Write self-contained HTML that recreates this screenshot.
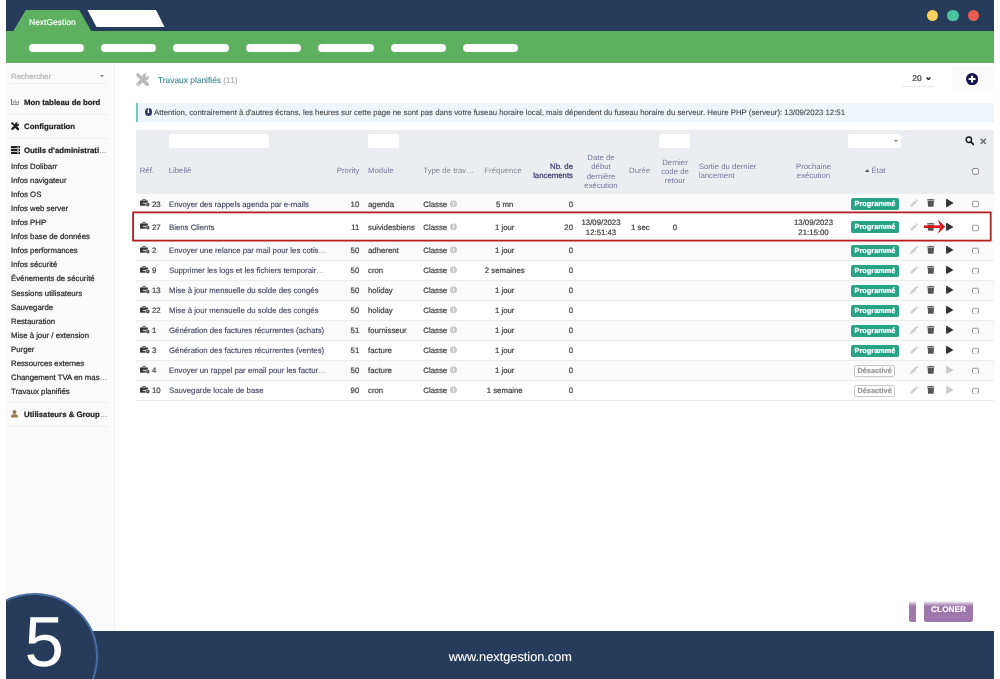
<!DOCTYPE html>
<html lang="fr"><head><meta charset="utf-8"><title>NextGestion - Travaux planifiés</title>
<style>
*{box-sizing:border-box;margin:0;padding:0}
html,body{width:1000px;height:679px;overflow:hidden;background:#fff}
body{-webkit-text-stroke:.22px;text-rendering:geometricPrecision;font-family:"Liberation Sans",sans-serif;font-size:7.8px;color:#444;position:relative}
.abs{position:absolute}
#frame{position:absolute;left:6px;top:0;width:988px;height:679px;overflow:hidden;will-change:transform;opacity:.9999}
#top{position:absolute;left:0;top:0;width:988px;height:31.500px;background:#273b5b}
#green{position:absolute;left:0;top:31px;width:988px;height:31.700px;background:#5db05f}
.pill{position:absolute;top:13px;height:8.400px;width:55.500px;border-radius:5px;background:#fff}
.dot{position:absolute;top:9.600px;width:11.600px;height:11.600px;border-radius:50%}
#tabname{position:absolute;left:23px;top:17px;color:#fff;font-size:8.5px;white-space:nowrap;-webkit-text-stroke:.15px}
#side{position:absolute;left:0;top:62.700px;width:108.500px;height:568px;background:#fafafa;border-right:1px solid #f3f3f3}
#side .srch{position:absolute;left:5px;top:9.300px;font-size:7.8px;line-height:9px;color:#b4b4b4}
#side .line{position:absolute;left:2.500px;width:99px;height:1px;background:#efefef}
#side .hd{position:absolute;left:18px;font-weight:bold;font-size:7.8px;line-height:9px;color:#1e1e1e;white-space:nowrap}
#side .it{position:absolute;left:5px;font-size:7.8px;line-height:9px;color:#2a2a2a;white-space:nowrap}
#foot{position:absolute;left:0;top:630.600px;width:988px;height:49px;background:#273b5b}
#foot span{position:absolute;left:0;width:1008.600px;text-align:center;top:18.4px;color:#fff;font-size:12.750px;white-space:nowrap;-webkit-text-stroke:.1px}
#circ{position:absolute;left:-35px;top:592.800px;width:127.400px;height:127.400px;border-radius:50%;background:#273b5b;border:2px solid #4a6da3}
#five{position:absolute;left:18.500px;top:603px;font-size:71px;line-height:80px;color:#fff;-webkit-text-stroke:0}
#title{position:absolute;left:152px;top:74.700px;font-size:8.4px;color:#3d8992;white-space:nowrap;-webkit-text-stroke:.12px}
#title i{font-style:normal;color:#aaa}
#info{position:absolute;left:129.500px;top:102.700px;width:858.500px;height:19px;background:#eef6fb;border-left:2.400px solid #7ec3c6}
#info span{position:absolute;left:16.600px;top:5px;-webkit-text-stroke:.12px;font-size:7.8px;color:#4c4c4c;white-space:nowrap}
#info .ib{position:absolute;left:7.100px;top:5.400px;width:7.800px;height:7.800px;border-radius:50%;background:#3b3b6b;color:#fff;font-size:6.500px;font-weight:bold;text-align:center;line-height:8px;font-family:"Liberation Serif",serif}
#thead{position:absolute;left:129.500px;top:129.500px;width:858.500px;height:64.300px;background:#ecedf0}
.inp{position:absolute;background:#fff;border-radius:2px;height:14.400px;top:4px}
.th{position:absolute;-webkit-text-stroke:0;color:#75779f;font-size:7.8px;line-height:9.200px;white-space:nowrap}
.th.c{text-align:center;transform:translateX(-50%)}
.th.r{text-align:right;transform:translateX(-100%)}
.row{position:absolute;left:129.500px;width:858.500px;border-bottom:1px solid #ececec}
.row.odd{background:#fafafa}
.row>*{position:absolute;white-space:nowrap;top:var(--c);transform:translateY(-50%);line-height:9.400px}
.row>svg,.row>.badge,.row>.cb{top:calc(var(--c) - var(--d))}
.row .c{transform:translate(-50%,-50%);text-align:center}
.row .r{transform:translate(-100%,-50%);text-align:right}
.el{font-style:normal;color:#999}
.row .lab{color:#3a3e5a;-webkit-text-stroke:.1px}
.row>.ml{top:calc(var(--c) - 1.1px)}
.ic-cron{width:10.100px;height:8.100px;left:4.400px}
.row>.ic-cron{top:calc(var(--c) - var(--d) - .8px)}
.row>.ic-pen,.row>.ic-trash,.row>.ic-play{top:calc(var(--c) - var(--d) - 1px)}
.row>.cb{top:calc(var(--c) - var(--d) - .3px)}
.row.r2>.ic-pen,.row.r2>.ic-trash,.row.r2>.ic-play{top:calc(var(--c) - var(--d) - .3px)}
.row.r2>.cb{top:calc(var(--c) - var(--d) + .8px)}
.ic-pen{width:8.400px;height:8.400px;left:774px}
.ic-trash{width:7.600px;height:8.400px;left:791.700px}
.ic-play{width:7.600px;height:8.600px;left:810.500px}
.cb{width:6.900px;height:6.900px}
.badge{left:715.400px;width:48.200px;height:11.800px;border-radius:2.200px;background:#27a483;color:#fff;font-weight:bold;font-size:7.35px;text-align:center;line-height:11.600px !important}
.badge.off{background:#fff;border:1px solid #c6c6c6;color:#999;left:718.700px;width:40.800px;line-height:9.800px !important}
.qi{display:inline-block;width:7px;height:7px;vertical-align:-1.300px;position:relative;top:-1.700px;margin-left:3.200px}
</style></head><body>
<div id="frame">
<div id="top"></div>
<div id="green"></div>
<svg class="abs" style="left:0;top:0" width="200" height="32" viewBox="0 0 200 32"><path d="M0 32V31h7.300L19.800 10H73.300L85.200 31V32z" fill="#5db05f"/><path d="M81.500 10H150l8.500 17H90.500z" fill="#fff"/></svg>
<div id="tabname">NextGestion</div>

<div class="pill" style="left:22.5px;top:44px"></div>
<div class="pill" style="left:94.9px;top:44px"></div>
<div class="pill" style="left:167.3px;top:44px"></div>
<div class="pill" style="left:239.7px;top:44px"></div>
<div class="pill" style="left:312.1px;top:44px"></div>
<div class="pill" style="left:384.5px;top:44px"></div>
<div class="pill" style="left:456.9px;top:44px"></div>
<div class="dot" style="left:920.700px;background:#fbd05f"></div><div class="dot" style="left:941.100px;background:#4bc4a1"></div><div class="dot" style="left:961.500px;background:#e7604f"></div>
<div id="side">
<div class="srch">Rechercher</div><svg class="abs" style="left:94px;top:12.500px" width="4" height="3" viewBox="0 0 4 3"><path d="M0 0h4L2 2.600z" fill="#888"/></svg>
<div class="line" style="top:20.700px"></div>
<svg class="abs" style="left:4.700px;top:36.400px" width="8.400" height="6.300" viewBox="0 0 84 63"><path d="M0 0h11v52h73v11H0z" fill="#777"/><path d="M20 24h10v22H20zM36 8h10v38H36zM52 24h10v22H52zM68 14h10v32H68z" fill="#8a8a8a"/></svg>
<div class="hd" style="top:35.3px">Mon tableau de bord</div>
<div class="line" style="top:51.700px"></div>
<svg class="abs" style="left:4.6px;top:59.5px" width="8.4" height="8.4" viewBox="0 0 134 134"><g stroke="#1a1a1a" stroke-linecap="round" fill="none"><path d="M18 18L50 50" stroke-width="32"/><path d="M52 52L80 80" stroke-width="12"/><path d="M86 86L113 113" stroke-width="38"/><path d="M22 112L54 80" stroke-width="38"/></g><circle cx="96" cy="38" r="33" fill="#1a1a1a"/><path d="M60 74L84 50" stroke="#1a1a1a" stroke-width="22"/><path d="M100 34L134 0" stroke="#fafafa" stroke-width="22"/><circle cx="19" cy="115" r="7" fill="#fafafa"/></svg>
<div class="hd" style="top:59.3px">Configuration</div>
<div class="line" style="top:75.600px"></div>
<svg class="abs" style="left:5px;top:83.500px" width="9" height="8" viewBox="0 0 9 8"><path d="M0 0h9v2.200H0zM0 2.900h9v2.200H0zM0 5.800h9V8H0z" fill="#222"/><path d="M6 .7h2v.8H6zM6 3.600h2v.8H6zM6 6.500h2v.8H6z" fill="#fafafa"/></svg>
<div class="hd" style="top:83.3px">Outils d'administrati<span style="font-weight:normal;color:#999">…</span></div>
<div class="it" style="top:99.3px">Infos Dolibarr</div>
<div class="it" style="top:113.3px">Infos navigateur</div>
<div class="it" style="top:127.3px">Infos OS</div>
<div class="it" style="top:141.3px">Infos web server</div>
<div class="it" style="top:155.3px">Infos PHP</div>
<div class="it" style="top:169.3px">Infos base de données</div>
<div class="it" style="top:183.3px">Infos performances</div>
<div class="it" style="top:197.3px">Infos sécurité</div>
<div class="it" style="top:211.3px">Événements de sécurité</div>
<div class="it" style="top:226.3px">Sessions utilisateurs</div>
<div class="it" style="top:240.3px">Sauvegarde</div>
<div class="it" style="top:254.3px">Restauration</div>
<div class="it" style="top:268.3px">Mise à jour / extension</div>
<div class="it" style="top:282.3px">Purger</div>
<div class="it" style="top:296.3px">Ressources externes</div>
<div class="it" style="top:310.3px">Changement TVA en mas<span style="color:#999">…</span></div>
<div class="it" style="top:324.3px">Travaux planifiés</div>
<div class="line" style="top:339.300px"></div>
<svg class="abs" style="left:5px;top:347.600px" width="7" height="7.600" viewBox="0 0 8 9"><circle cx="4" cy="2.300" r="2.300" fill="#9a7a4a"/><path d="M0 9V7.500C0 6 1.200 5 2.500 5h3C6.800 5 8 6 8 7.500V9z" fill="#9a7a4a"/></svg>
<div class="hd" style="top:347.3px">Utilisateurs &amp; Group<span style="font-weight:normal;color:#999">…</span></div>
<div class="line" style="top:363.500px"></div>
</div>
<svg class="abs" style="left:129.8px;top:72.7px" width="13.4" height="13.4" viewBox="0 0 134 134"><g stroke="#b9b9b9" stroke-linecap="round" fill="none"><path d="M18 18L50 50" stroke-width="32"/><path d="M52 52L80 80" stroke-width="12"/><path d="M86 86L113 113" stroke-width="38"/><path d="M22 112L54 80" stroke-width="38"/></g><circle cx="96" cy="38" r="33" fill="#b9b9b9"/><path d="M60 74L84 50" stroke="#b9b9b9" stroke-width="22"/><path d="M100 34L134 0" stroke="#fff" stroke-width="22"/><circle cx="19" cy="115" r="7" fill="#fff"/></svg>
<div id="title">Travaux planifiés <i>(11)</i></div>
<div class="abs" style="left:906.3px;top:74.3px;font-size:8.4px;line-height:9px;color:#333">20</div><svg class="abs" style="left:920.3px;top:77px" width="5" height="3.4" viewBox="0 0 50 34"><path d="M6 6L25 26 44 6" stroke="#222" stroke-width="14" fill="none"/></svg><div class="abs" style="left:895.5px;top:85.9px;width:32.700px;height:1px;background:#e9e9e9"></div>
<div class="abs" style="left:945.8px;top:66px;width:41.200px;height:24.800px;background:#fafafa"></div><svg class="abs" style="left:959.9px;top:72.7px" width="12.2" height="12.2" viewBox="0 0 12 12"><circle cx="6" cy="6" r="6" fill="#161650"/><path d="M6 2.600v6.800M2.600 6h6.800" stroke="#fff" stroke-width="2"/></svg>
<div id="info"><div class="ib">i</div><span>Attention, contrairement à d'autres écrans, les heures sur cette page ne sont pas dans votre fuseau horaire local, mais dépendent du fuseau horaire du serveur. Heure PHP (serveur): 13/09/2023 12:51</span></div>
<div id="thead">
<div class="inp" style="left:33.7px;width:100px"></div>
<div class="inp" style="left:232.5px;width:31px"></div>
<div class="inp" style="left:523.2px;width:31.700px"></div>
<div class="inp" style="left:712.8px;width:52.800px"></div><svg class="abs" style="left:758.1px;top:10.500px" width="4" height="3" viewBox="0 0 4 3"><path d="M0 0h4L2 2.600z" fill="#888"/></svg>
<svg class="abs" style="left:829.3px;top:6.800px" width="9.500" height="9.500" viewBox="0 0 10 10"><circle cx="4" cy="4" r="2.900" stroke="#111" stroke-width="1.450" fill="none"/><path d="M6.400 6.400L9.100 9.100" stroke="#111" stroke-width="1.700" stroke-linecap="round"/></svg>
<svg class="abs" style="left:844.8px;top:8.300px" width="6.500" height="6.500" viewBox="0 0 7 7"><path d="M.8.800L6.200 6.200M6.200.8L.8 6.200" stroke="#6e6e6e" stroke-width="1.800" stroke-linecap="butt"/></svg>
<div class="th " style="left:4.2px;top:36.7px">Réf.</div>
<div class="th " style="left:33.2px;top:36.7px">Libellé</div>
<div class="th r" style="left:223.8px;top:36.7px">Prority</div>
<div class="th " style="left:232.5px;top:36.7px">Module</div>
<div class="th " style="left:287.8px;top:36.7px"><span style="color:#85858f">Type de trav…</span></div>
<div class="th c" style="left:367.5px;top:36.7px"><span style="color:#85858f">Fréquence</span></div>
<div class="th r" style="left:437.5px;top:32.2px"><span style="color:#35386a;-webkit-text-stroke:.2px">Nb. de<br>lancements</span></div>
<div class="th c" style="left:465.5px;top:23.6px">Date de<br>début<br>dernière<br>exécution</div>
<div class="th " style="left:493.5px;top:36.7px"><span style="color:#7f8096">Durée</span></div>
<div class="th c" style="left:539.5px;top:28.1px">Dernier<br>code de<br>retour</div>
<div class="th " style="left:563.2px;top:32.7px">Sortie du dernier<br>lancement</div>
<div class="th c" style="left:678.0px;top:32.7px">Prochaine<br>exécution</div>
<div class="th " style="left:729.3px;top:36.7px"><svg width="4.600" height="3" viewBox="0 0 46 30" style="vertical-align:1.500px;margin-right:2.200px"><path d="M0 30L23 2 46 30z" fill="#555"/></svg>État</div>
<svg class="cb abs" viewBox="0 0 70 70" style="left:836.5px;top:38.9px"><rect x="5" y="5" width="60" height="60" rx="15" fill="#fff" stroke="#7e7e7e" stroke-width="9.500"/></svg>
</div>
<div class="row odd" style="top:193.7px;height:19.3px;--c:11.7px;--d:1.4px">
<svg class="ic-cron" viewBox="0 0 104 83"><path d="M25 18L28 4.500H56L59 18" stroke="#3a3a3a" stroke-width="8" fill="none" stroke-linejoin="round"/><rect x="0" y="15" width="82" height="54" rx="6" fill="#3a3a3a"/><rect x="29" y="40" width="40" height="9" fill="#f4f4f4"/><circle cx="80" cy="58" r="22" fill="#3a3a3a" stroke="#fcfcfc" stroke-width="6"/><path d="M76 49v12h11" stroke="#f0f0f0" stroke-width="6" fill="none"/></svg>
<span style="left:16.5px">23</span>
<span class="lab" style="left:33.5px">Envoyer des rappels agenda par e-mails</span>
<span class="r" style="left:223.8px">10</span>
<span style="left:232.5px">agenda</span>
<span style="left:287.8px">Classe<svg class="qi" viewBox="0 0 12 12"><circle cx="6" cy="6" r="6" fill="#cacaca"/><path d="M5.300 5h1.500v4.300H5.300zM5.300 2.700h1.500v1.500H5.300z" fill="#fff"/></svg></span>
<span class="c" style="left:369.2px">5 mn</span>
<span class="r" style="left:437.5px">0</span>
<span class="badge">Programmé</span>
<svg class="ic-pen" viewBox="0 0 16 16"><path fill="#ccc" d="M11.300 1.300a1.500 1.500 0 0 1 2.100 0l1.300 1.300a1.500 1.500 0 0 1 0 2.100l-1.200 1.200-3.400-3.400zM9.200 3.400l3.400 3.400-7.800 7.800-4 .8.800-4z"/></svg>
<svg class="ic-trash" viewBox="0 0 14 16"><path fill="#555" d="M5 0h4l.6 1H13.200a.8.800 0 0 1 .8.800V3H0V1.800A.8.800 0 0 1 .8 1H4.400zM1 4h12l-.7 10.600A1.500 1.500 0 0 1 10.800 16H3.200a1.500 1.500 0 0 1-1.500-1.400z"/></svg>
<svg class="ic-play" viewBox="0 0 14 16"><path fill="#333" d="M1 .3L13.300 7.400a.7.700 0 0 1 0 1.200L1 15.700a.7.700 0 0 1-1-.6V.9A.7.700 0 0 1 1 .3z"/></svg>
<svg class="cb" viewBox="0 0 70 70" style="left:836.5px"><rect x="5" y="5" width="60" height="60" rx="15" fill="#fff" stroke="#7e7e7e" stroke-width="9.500"/></svg>
</div>
<div class="row r2" style="top:213.0px;height:28.0px;--c:15.4px;--d:1.5px">
<svg class="ic-cron" viewBox="0 0 104 83"><path d="M25 18L28 4.500H56L59 18" stroke="#3a3a3a" stroke-width="8" fill="none" stroke-linejoin="round"/><rect x="0" y="15" width="82" height="54" rx="6" fill="#3a3a3a"/><rect x="29" y="40" width="40" height="9" fill="#f4f4f4"/><circle cx="80" cy="58" r="22" fill="#3a3a3a" stroke="#fcfcfc" stroke-width="6"/><path d="M76 49v12h11" stroke="#f0f0f0" stroke-width="6" fill="none"/></svg>
<span style="left:16.5px">27</span>
<span class="lab" style="left:33.5px">Biens Clients</span>
<span class="r" style="left:223.8px">11</span>
<span style="left:232.5px">suividesbiens</span>
<span style="left:287.8px">Classe<svg class="qi" viewBox="0 0 12 12"><circle cx="6" cy="6" r="6" fill="#cacaca"/><path d="M5.300 5h1.500v4.300H5.300zM5.300 2.700h1.500v1.500H5.300z" fill="#fff"/></svg></span>
<span class="c" style="left:369.2px">1 jour</span>
<span class="r" style="left:437.5px">20</span>
<span class="c ml" style="left:465.5px">13/09/2023<br>12:51:43</span>
<span style="left:495.5px">1 sec</span>
<span class="c" style="left:539.5px">0</span>
<span class="c ml" style="left:678.0px">13/09/2023<br>21:15:00</span>
<span class="badge">Programmé</span>
<svg class="ic-pen" viewBox="0 0 16 16"><path fill="#ccc" d="M11.300 1.300a1.500 1.500 0 0 1 2.100 0l1.300 1.300a1.500 1.500 0 0 1 0 2.100l-1.200 1.200-3.400-3.400zM9.200 3.400l3.400 3.400-7.800 7.800-4 .8.800-4z"/></svg>
<svg class="ic-trash" viewBox="0 0 14 16"><path fill="#555" d="M5 0h4l.6 1H13.200a.8.800 0 0 1 .8.800V3H0V1.800A.8.800 0 0 1 .8 1H4.400zM1 4h12l-.7 10.600A1.500 1.500 0 0 1 10.800 16H3.200a1.500 1.500 0 0 1-1.500-1.400z"/></svg>
<svg class="ic-play" viewBox="0 0 14 16"><path fill="#333" d="M1 .3L13.300 7.400a.7.700 0 0 1 0 1.200L1 15.700a.7.700 0 0 1-1-.6V.9A.7.700 0 0 1 1 .3z"/></svg>
<svg class="cb" viewBox="0 0 70 70" style="left:836.5px"><rect x="5" y="5" width="60" height="60" rx="15" fill="#fff" stroke="#7e7e7e" stroke-width="9.500"/></svg>
</div>
<div class="row odd" style="top:241.0px;height:20.0px;--c:10.4px;--d:0.6px">
<svg class="ic-cron" viewBox="0 0 104 83"><path d="M25 18L28 4.500H56L59 18" stroke="#3a3a3a" stroke-width="8" fill="none" stroke-linejoin="round"/><rect x="0" y="15" width="82" height="54" rx="6" fill="#3a3a3a"/><rect x="29" y="40" width="40" height="9" fill="#f4f4f4"/><circle cx="80" cy="58" r="22" fill="#3a3a3a" stroke="#fcfcfc" stroke-width="6"/><path d="M76 49v12h11" stroke="#f0f0f0" stroke-width="6" fill="none"/></svg>
<span style="left:16.5px">2</span>
<span class="lab" style="left:33.5px">Envoyer une relance par mail pour les cotis<i class="el">…</i></span>
<span class="r" style="left:223.8px">50</span>
<span style="left:232.5px">adherent</span>
<span style="left:287.8px">Classe<svg class="qi" viewBox="0 0 12 12"><circle cx="6" cy="6" r="6" fill="#cacaca"/><path d="M5.300 5h1.500v4.300H5.300zM5.300 2.700h1.500v1.500H5.300z" fill="#fff"/></svg></span>
<span class="c" style="left:369.2px">1 jour</span>
<span class="r" style="left:437.5px">0</span>
<span class="badge">Programmé</span>
<svg class="ic-pen" viewBox="0 0 16 16"><path fill="#ccc" d="M11.300 1.300a1.500 1.500 0 0 1 2.100 0l1.300 1.300a1.500 1.500 0 0 1 0 2.100l-1.200 1.200-3.400-3.400zM9.200 3.400l3.400 3.400-7.800 7.800-4 .8.800-4z"/></svg>
<svg class="ic-trash" viewBox="0 0 14 16"><path fill="#555" d="M5 0h4l.6 1H13.200a.8.800 0 0 1 .8.800V3H0V1.800A.8.800 0 0 1 .8 1H4.400zM1 4h12l-.7 10.600A1.500 1.500 0 0 1 10.800 16H3.200a1.500 1.500 0 0 1-1.500-1.400z"/></svg>
<svg class="ic-play" viewBox="0 0 14 16"><path fill="#333" d="M1 .3L13.300 7.400a.7.700 0 0 1 0 1.200L1 15.700a.7.700 0 0 1-1-.6V.9A.7.700 0 0 1 1 .3z"/></svg>
<svg class="cb" viewBox="0 0 70 70" style="left:836.5px"><rect x="5" y="5" width="60" height="60" rx="15" fill="#fff" stroke="#7e7e7e" stroke-width="9.500"/></svg>
</div>
<div class="row" style="top:261.0px;height:20.0px;--c:10.4px;--d:0.6px">
<svg class="ic-cron" viewBox="0 0 104 83"><path d="M25 18L28 4.500H56L59 18" stroke="#3a3a3a" stroke-width="8" fill="none" stroke-linejoin="round"/><rect x="0" y="15" width="82" height="54" rx="6" fill="#3a3a3a"/><rect x="29" y="40" width="40" height="9" fill="#f4f4f4"/><circle cx="80" cy="58" r="22" fill="#3a3a3a" stroke="#fcfcfc" stroke-width="6"/><path d="M76 49v12h11" stroke="#f0f0f0" stroke-width="6" fill="none"/></svg>
<span style="left:16.5px">9</span>
<span class="lab" style="left:33.5px">Supprimer les logs et les fichiers temporair<i class="el">…</i></span>
<span class="r" style="left:223.8px">50</span>
<span style="left:232.5px">cron</span>
<span style="left:287.8px">Classe<svg class="qi" viewBox="0 0 12 12"><circle cx="6" cy="6" r="6" fill="#cacaca"/><path d="M5.300 5h1.500v4.300H5.300zM5.300 2.700h1.500v1.500H5.300z" fill="#fff"/></svg></span>
<span class="c" style="left:369.2px">2 semaines</span>
<span class="r" style="left:437.5px">0</span>
<span class="badge">Programmé</span>
<svg class="ic-pen" viewBox="0 0 16 16"><path fill="#ccc" d="M11.300 1.300a1.500 1.500 0 0 1 2.100 0l1.300 1.300a1.500 1.500 0 0 1 0 2.100l-1.200 1.200-3.400-3.400zM9.200 3.400l3.400 3.400-7.800 7.800-4 .8.800-4z"/></svg>
<svg class="ic-trash" viewBox="0 0 14 16"><path fill="#555" d="M5 0h4l.6 1H13.200a.8.800 0 0 1 .8.800V3H0V1.800A.8.800 0 0 1 .8 1H4.400zM1 4h12l-.7 10.600A1.500 1.500 0 0 1 10.800 16H3.200a1.500 1.500 0 0 1-1.500-1.400z"/></svg>
<svg class="ic-play" viewBox="0 0 14 16"><path fill="#333" d="M1 .3L13.300 7.400a.7.700 0 0 1 0 1.200L1 15.700a.7.700 0 0 1-1-.6V.9A.7.700 0 0 1 1 .3z"/></svg>
<svg class="cb" viewBox="0 0 70 70" style="left:836.5px"><rect x="5" y="5" width="60" height="60" rx="15" fill="#fff" stroke="#7e7e7e" stroke-width="9.500"/></svg>
</div>
<div class="row odd" style="top:281.0px;height:20.0px;--c:10.4px;--d:0.6px">
<svg class="ic-cron" viewBox="0 0 104 83"><path d="M25 18L28 4.500H56L59 18" stroke="#3a3a3a" stroke-width="8" fill="none" stroke-linejoin="round"/><rect x="0" y="15" width="82" height="54" rx="6" fill="#3a3a3a"/><rect x="29" y="40" width="40" height="9" fill="#f4f4f4"/><circle cx="80" cy="58" r="22" fill="#3a3a3a" stroke="#fcfcfc" stroke-width="6"/><path d="M76 49v12h11" stroke="#f0f0f0" stroke-width="6" fill="none"/></svg>
<span style="left:16.5px">13</span>
<span class="lab" style="left:33.5px">Mise à jour mensuelle du solde des congés</span>
<span class="r" style="left:223.8px">50</span>
<span style="left:232.5px">holiday</span>
<span style="left:287.8px">Classe<svg class="qi" viewBox="0 0 12 12"><circle cx="6" cy="6" r="6" fill="#cacaca"/><path d="M5.300 5h1.500v4.300H5.300zM5.300 2.700h1.500v1.500H5.300z" fill="#fff"/></svg></span>
<span class="c" style="left:369.2px">1 jour</span>
<span class="r" style="left:437.5px">0</span>
<span class="badge">Programmé</span>
<svg class="ic-pen" viewBox="0 0 16 16"><path fill="#ccc" d="M11.300 1.300a1.500 1.500 0 0 1 2.100 0l1.300 1.300a1.500 1.500 0 0 1 0 2.100l-1.200 1.200-3.400-3.400zM9.200 3.400l3.400 3.400-7.800 7.800-4 .8.800-4z"/></svg>
<svg class="ic-trash" viewBox="0 0 14 16"><path fill="#555" d="M5 0h4l.6 1H13.200a.8.800 0 0 1 .8.800V3H0V1.800A.8.800 0 0 1 .8 1H4.400zM1 4h12l-.7 10.600A1.500 1.500 0 0 1 10.800 16H3.200a1.500 1.500 0 0 1-1.500-1.400z"/></svg>
<svg class="ic-play" viewBox="0 0 14 16"><path fill="#333" d="M1 .3L13.300 7.400a.7.700 0 0 1 0 1.200L1 15.700a.7.700 0 0 1-1-.6V.9A.7.700 0 0 1 1 .3z"/></svg>
<svg class="cb" viewBox="0 0 70 70" style="left:836.5px"><rect x="5" y="5" width="60" height="60" rx="15" fill="#fff" stroke="#7e7e7e" stroke-width="9.500"/></svg>
</div>
<div class="row" style="top:301.0px;height:20.0px;--c:10.4px;--d:0.6px">
<svg class="ic-cron" viewBox="0 0 104 83"><path d="M25 18L28 4.500H56L59 18" stroke="#3a3a3a" stroke-width="8" fill="none" stroke-linejoin="round"/><rect x="0" y="15" width="82" height="54" rx="6" fill="#3a3a3a"/><rect x="29" y="40" width="40" height="9" fill="#f4f4f4"/><circle cx="80" cy="58" r="22" fill="#3a3a3a" stroke="#fcfcfc" stroke-width="6"/><path d="M76 49v12h11" stroke="#f0f0f0" stroke-width="6" fill="none"/></svg>
<span style="left:16.5px">22</span>
<span class="lab" style="left:33.5px">Mise à jour mensuelle du solde des congés</span>
<span class="r" style="left:223.8px">50</span>
<span style="left:232.5px">holiday</span>
<span style="left:287.8px">Classe<svg class="qi" viewBox="0 0 12 12"><circle cx="6" cy="6" r="6" fill="#cacaca"/><path d="M5.300 5h1.500v4.300H5.300zM5.300 2.700h1.500v1.500H5.300z" fill="#fff"/></svg></span>
<span class="c" style="left:369.2px">1 jour</span>
<span class="r" style="left:437.5px">0</span>
<span class="badge">Programmé</span>
<svg class="ic-pen" viewBox="0 0 16 16"><path fill="#ccc" d="M11.300 1.300a1.500 1.500 0 0 1 2.100 0l1.300 1.300a1.500 1.500 0 0 1 0 2.100l-1.200 1.200-3.400-3.400zM9.200 3.400l3.400 3.400-7.800 7.800-4 .8.800-4z"/></svg>
<svg class="ic-trash" viewBox="0 0 14 16"><path fill="#555" d="M5 0h4l.6 1H13.200a.8.800 0 0 1 .8.800V3H0V1.800A.8.800 0 0 1 .8 1H4.400zM1 4h12l-.7 10.600A1.500 1.500 0 0 1 10.800 16H3.200a1.500 1.500 0 0 1-1.500-1.400z"/></svg>
<svg class="ic-play" viewBox="0 0 14 16"><path fill="#333" d="M1 .3L13.300 7.400a.7.700 0 0 1 0 1.200L1 15.700a.7.700 0 0 1-1-.6V.9A.7.700 0 0 1 1 .3z"/></svg>
<svg class="cb" viewBox="0 0 70 70" style="left:836.5px"><rect x="5" y="5" width="60" height="60" rx="15" fill="#fff" stroke="#7e7e7e" stroke-width="9.500"/></svg>
</div>
<div class="row odd" style="top:321.0px;height:20.0px;--c:10.4px;--d:0.6px">
<svg class="ic-cron" viewBox="0 0 104 83"><path d="M25 18L28 4.500H56L59 18" stroke="#3a3a3a" stroke-width="8" fill="none" stroke-linejoin="round"/><rect x="0" y="15" width="82" height="54" rx="6" fill="#3a3a3a"/><rect x="29" y="40" width="40" height="9" fill="#f4f4f4"/><circle cx="80" cy="58" r="22" fill="#3a3a3a" stroke="#fcfcfc" stroke-width="6"/><path d="M76 49v12h11" stroke="#f0f0f0" stroke-width="6" fill="none"/></svg>
<span style="left:16.5px">1</span>
<span class="lab" style="left:33.5px">Génération des factures récurrentes (achats)</span>
<span class="r" style="left:223.8px">51</span>
<span style="left:232.5px">fournisseur</span>
<span style="left:287.8px">Classe<svg class="qi" viewBox="0 0 12 12"><circle cx="6" cy="6" r="6" fill="#cacaca"/><path d="M5.300 5h1.500v4.300H5.300zM5.300 2.700h1.500v1.500H5.300z" fill="#fff"/></svg></span>
<span class="c" style="left:369.2px">1 jour</span>
<span class="r" style="left:437.5px">0</span>
<span class="badge">Programmé</span>
<svg class="ic-pen" viewBox="0 0 16 16"><path fill="#ccc" d="M11.300 1.300a1.500 1.500 0 0 1 2.100 0l1.300 1.300a1.500 1.500 0 0 1 0 2.100l-1.200 1.200-3.400-3.400zM9.200 3.400l3.400 3.400-7.800 7.800-4 .8.800-4z"/></svg>
<svg class="ic-trash" viewBox="0 0 14 16"><path fill="#555" d="M5 0h4l.6 1H13.200a.8.800 0 0 1 .8.800V3H0V1.800A.8.800 0 0 1 .8 1H4.400zM1 4h12l-.7 10.600A1.500 1.500 0 0 1 10.800 16H3.200a1.500 1.500 0 0 1-1.500-1.400z"/></svg>
<svg class="ic-play" viewBox="0 0 14 16"><path fill="#333" d="M1 .3L13.300 7.400a.7.700 0 0 1 0 1.200L1 15.700a.7.700 0 0 1-1-.6V.9A.7.700 0 0 1 1 .3z"/></svg>
<svg class="cb" viewBox="0 0 70 70" style="left:836.5px"><rect x="5" y="5" width="60" height="60" rx="15" fill="#fff" stroke="#7e7e7e" stroke-width="9.500"/></svg>
</div>
<div class="row" style="top:341.0px;height:20.0px;--c:10.4px;--d:0.6px">
<svg class="ic-cron" viewBox="0 0 104 83"><path d="M25 18L28 4.500H56L59 18" stroke="#3a3a3a" stroke-width="8" fill="none" stroke-linejoin="round"/><rect x="0" y="15" width="82" height="54" rx="6" fill="#3a3a3a"/><rect x="29" y="40" width="40" height="9" fill="#f4f4f4"/><circle cx="80" cy="58" r="22" fill="#3a3a3a" stroke="#fcfcfc" stroke-width="6"/><path d="M76 49v12h11" stroke="#f0f0f0" stroke-width="6" fill="none"/></svg>
<span style="left:16.5px">3</span>
<span class="lab" style="left:33.5px">Génération des factures récurrentes (ventes)</span>
<span class="r" style="left:223.8px">51</span>
<span style="left:232.5px">facture</span>
<span style="left:287.8px">Classe<svg class="qi" viewBox="0 0 12 12"><circle cx="6" cy="6" r="6" fill="#cacaca"/><path d="M5.300 5h1.500v4.300H5.300zM5.300 2.700h1.500v1.500H5.300z" fill="#fff"/></svg></span>
<span class="c" style="left:369.2px">1 jour</span>
<span class="r" style="left:437.5px">0</span>
<span class="badge">Programmé</span>
<svg class="ic-pen" viewBox="0 0 16 16"><path fill="#ccc" d="M11.300 1.300a1.500 1.500 0 0 1 2.100 0l1.300 1.300a1.500 1.500 0 0 1 0 2.100l-1.200 1.200-3.400-3.400zM9.200 3.400l3.400 3.400-7.800 7.800-4 .8.800-4z"/></svg>
<svg class="ic-trash" viewBox="0 0 14 16"><path fill="#555" d="M5 0h4l.6 1H13.200a.8.800 0 0 1 .8.800V3H0V1.800A.8.800 0 0 1 .8 1H4.400zM1 4h12l-.7 10.600A1.500 1.500 0 0 1 10.800 16H3.200a1.500 1.500 0 0 1-1.500-1.400z"/></svg>
<svg class="ic-play" viewBox="0 0 14 16"><path fill="#333" d="M1 .3L13.300 7.400a.7.700 0 0 1 0 1.200L1 15.700a.7.700 0 0 1-1-.6V.9A.7.700 0 0 1 1 .3z"/></svg>
<svg class="cb" viewBox="0 0 70 70" style="left:836.5px"><rect x="5" y="5" width="60" height="60" rx="15" fill="#fff" stroke="#7e7e7e" stroke-width="9.500"/></svg>
</div>
<div class="row odd" style="top:361.0px;height:20.0px;--c:10.4px;--d:0.6px">
<svg class="ic-cron" viewBox="0 0 104 83"><path d="M25 18L28 4.500H56L59 18" stroke="#3a3a3a" stroke-width="8" fill="none" stroke-linejoin="round"/><rect x="0" y="15" width="82" height="54" rx="6" fill="#3a3a3a"/><rect x="29" y="40" width="40" height="9" fill="#f4f4f4"/><circle cx="80" cy="58" r="22" fill="#3a3a3a" stroke="#fcfcfc" stroke-width="6"/><path d="M76 49v12h11" stroke="#f0f0f0" stroke-width="6" fill="none"/></svg>
<span style="left:16.5px">4</span>
<span class="lab" style="left:33.5px">Envoyer un rappel par email pour les factur<i class="el">…</i></span>
<span class="r" style="left:223.8px">50</span>
<span style="left:232.5px">facture</span>
<span style="left:287.8px">Classe<svg class="qi" viewBox="0 0 12 12"><circle cx="6" cy="6" r="6" fill="#cacaca"/><path d="M5.300 5h1.500v4.300H5.300zM5.300 2.700h1.500v1.500H5.300z" fill="#fff"/></svg></span>
<span class="c" style="left:369.2px">1 jour</span>
<span class="r" style="left:437.5px">0</span>
<span class="badge off">Désactivé</span>
<svg class="ic-pen" viewBox="0 0 16 16"><path fill="#ccc" d="M11.300 1.300a1.500 1.500 0 0 1 2.100 0l1.300 1.300a1.500 1.500 0 0 1 0 2.100l-1.200 1.200-3.400-3.400zM9.200 3.400l3.400 3.400-7.800 7.800-4 .8.800-4z"/></svg>
<svg class="ic-trash" viewBox="0 0 14 16"><path fill="#555" d="M5 0h4l.6 1H13.200a.8.800 0 0 1 .8.800V3H0V1.800A.8.800 0 0 1 .8 1H4.400zM1 4h12l-.7 10.600A1.500 1.500 0 0 1 10.800 16H3.200a1.500 1.500 0 0 1-1.500-1.400z"/></svg>
<svg class="ic-play" viewBox="0 0 14 16"><path fill="#ccc" d="M1 .3L13.300 7.400a.7.700 0 0 1 0 1.200L1 15.700a.7.700 0 0 1-1-.6V.9A.7.700 0 0 1 1 .3z"/></svg>
<svg class="cb" viewBox="0 0 70 70" style="left:836.5px"><rect x="5" y="5" width="60" height="60" rx="15" fill="#fff" stroke="#7e7e7e" stroke-width="9.500"/></svg>
</div>
<div class="row" style="top:381.0px;height:20.0px;--c:10.4px;--d:0.6px">
<svg class="ic-cron" viewBox="0 0 104 83"><path d="M25 18L28 4.500H56L59 18" stroke="#3a3a3a" stroke-width="8" fill="none" stroke-linejoin="round"/><rect x="0" y="15" width="82" height="54" rx="6" fill="#3a3a3a"/><rect x="29" y="40" width="40" height="9" fill="#f4f4f4"/><circle cx="80" cy="58" r="22" fill="#3a3a3a" stroke="#fcfcfc" stroke-width="6"/><path d="M76 49v12h11" stroke="#f0f0f0" stroke-width="6" fill="none"/></svg>
<span style="left:16.5px">10</span>
<span class="lab" style="left:33.5px">Sauvegarde locale de base</span>
<span class="r" style="left:223.8px">90</span>
<span style="left:232.5px">cron</span>
<span style="left:287.8px">Classe<svg class="qi" viewBox="0 0 12 12"><circle cx="6" cy="6" r="6" fill="#cacaca"/><path d="M5.300 5h1.500v4.300H5.300zM5.300 2.700h1.500v1.500H5.300z" fill="#fff"/></svg></span>
<span class="c" style="left:369.2px">1 semaine</span>
<span class="r" style="left:437.5px">0</span>
<span class="badge off">Désactivé</span>
<svg class="ic-pen" viewBox="0 0 16 16"><path fill="#ccc" d="M11.300 1.300a1.500 1.500 0 0 1 2.100 0l1.300 1.300a1.500 1.500 0 0 1 0 2.100l-1.200 1.200-3.400-3.400zM9.200 3.400l3.400 3.400-7.800 7.800-4 .8.800-4z"/></svg>
<svg class="ic-trash" viewBox="0 0 14 16"><path fill="#555" d="M5 0h4l.6 1H13.200a.8.800 0 0 1 .8.800V3H0V1.800A.8.800 0 0 1 .8 1H4.400zM1 4h12l-.7 10.600A1.500 1.500 0 0 1 10.800 16H3.200a1.500 1.500 0 0 1-1.500-1.400z"/></svg>
<svg class="ic-play" viewBox="0 0 14 16"><path fill="#ccc" d="M1 .3L13.300 7.400a.7.700 0 0 1 0 1.200L1 15.700a.7.700 0 0 1-1-.6V.9A.7.700 0 0 1 1 .3z"/></svg>
<svg class="cb" viewBox="0 0 70 70" style="left:836.5px"><rect x="5" y="5" width="60" height="60" rx="15" fill="#fff" stroke="#7e7e7e" stroke-width="9.500"/></svg>
</div>
<svg class="abs" style="left:120px;top:205px" width="868" height="42" viewBox="0 0 868 42"><rect x="7.100" y="7.400" width="857.600" height="28.200" fill="none" stroke="#b61d22" stroke-width="1.800"/></svg>
<svg class="abs" style="left:916px;top:218px" width="26" height="18" viewBox="0 0 26 18"><path d="M2 8.700H18" stroke="#de1318" stroke-width="2.600"/><path d="M23.200 8.700L15.800 1.600 18.400 8.700 15.800 15.800z" fill="#de1318"/></svg>
<div class="abs" style="left:903px;top:601.2px;width:6.700px;height:20.500px;border-radius:0 0 0 2.5px;background:linear-gradient(#fff 0,#c9b3d1 12%,#9e77ab 26%)"></div>
<div class="abs" style="left:917.8px;top:601.2px;width:49.600px;height:20.500px;border-radius:0 0 2.5px 2.5px;background:linear-gradient(#fff 0,#c9b3d1 12%,#9e77ab 26%);color:#fff;font-weight:bold;font-size:8.300px;text-align:center;line-height:17.4px;-webkit-text-stroke:.1px">CLONER</div>
<div id="foot"><span>www.nextgestion.com</span></div>
<div id="circ"></div><div id="five">5</div>
</div></body></html>
